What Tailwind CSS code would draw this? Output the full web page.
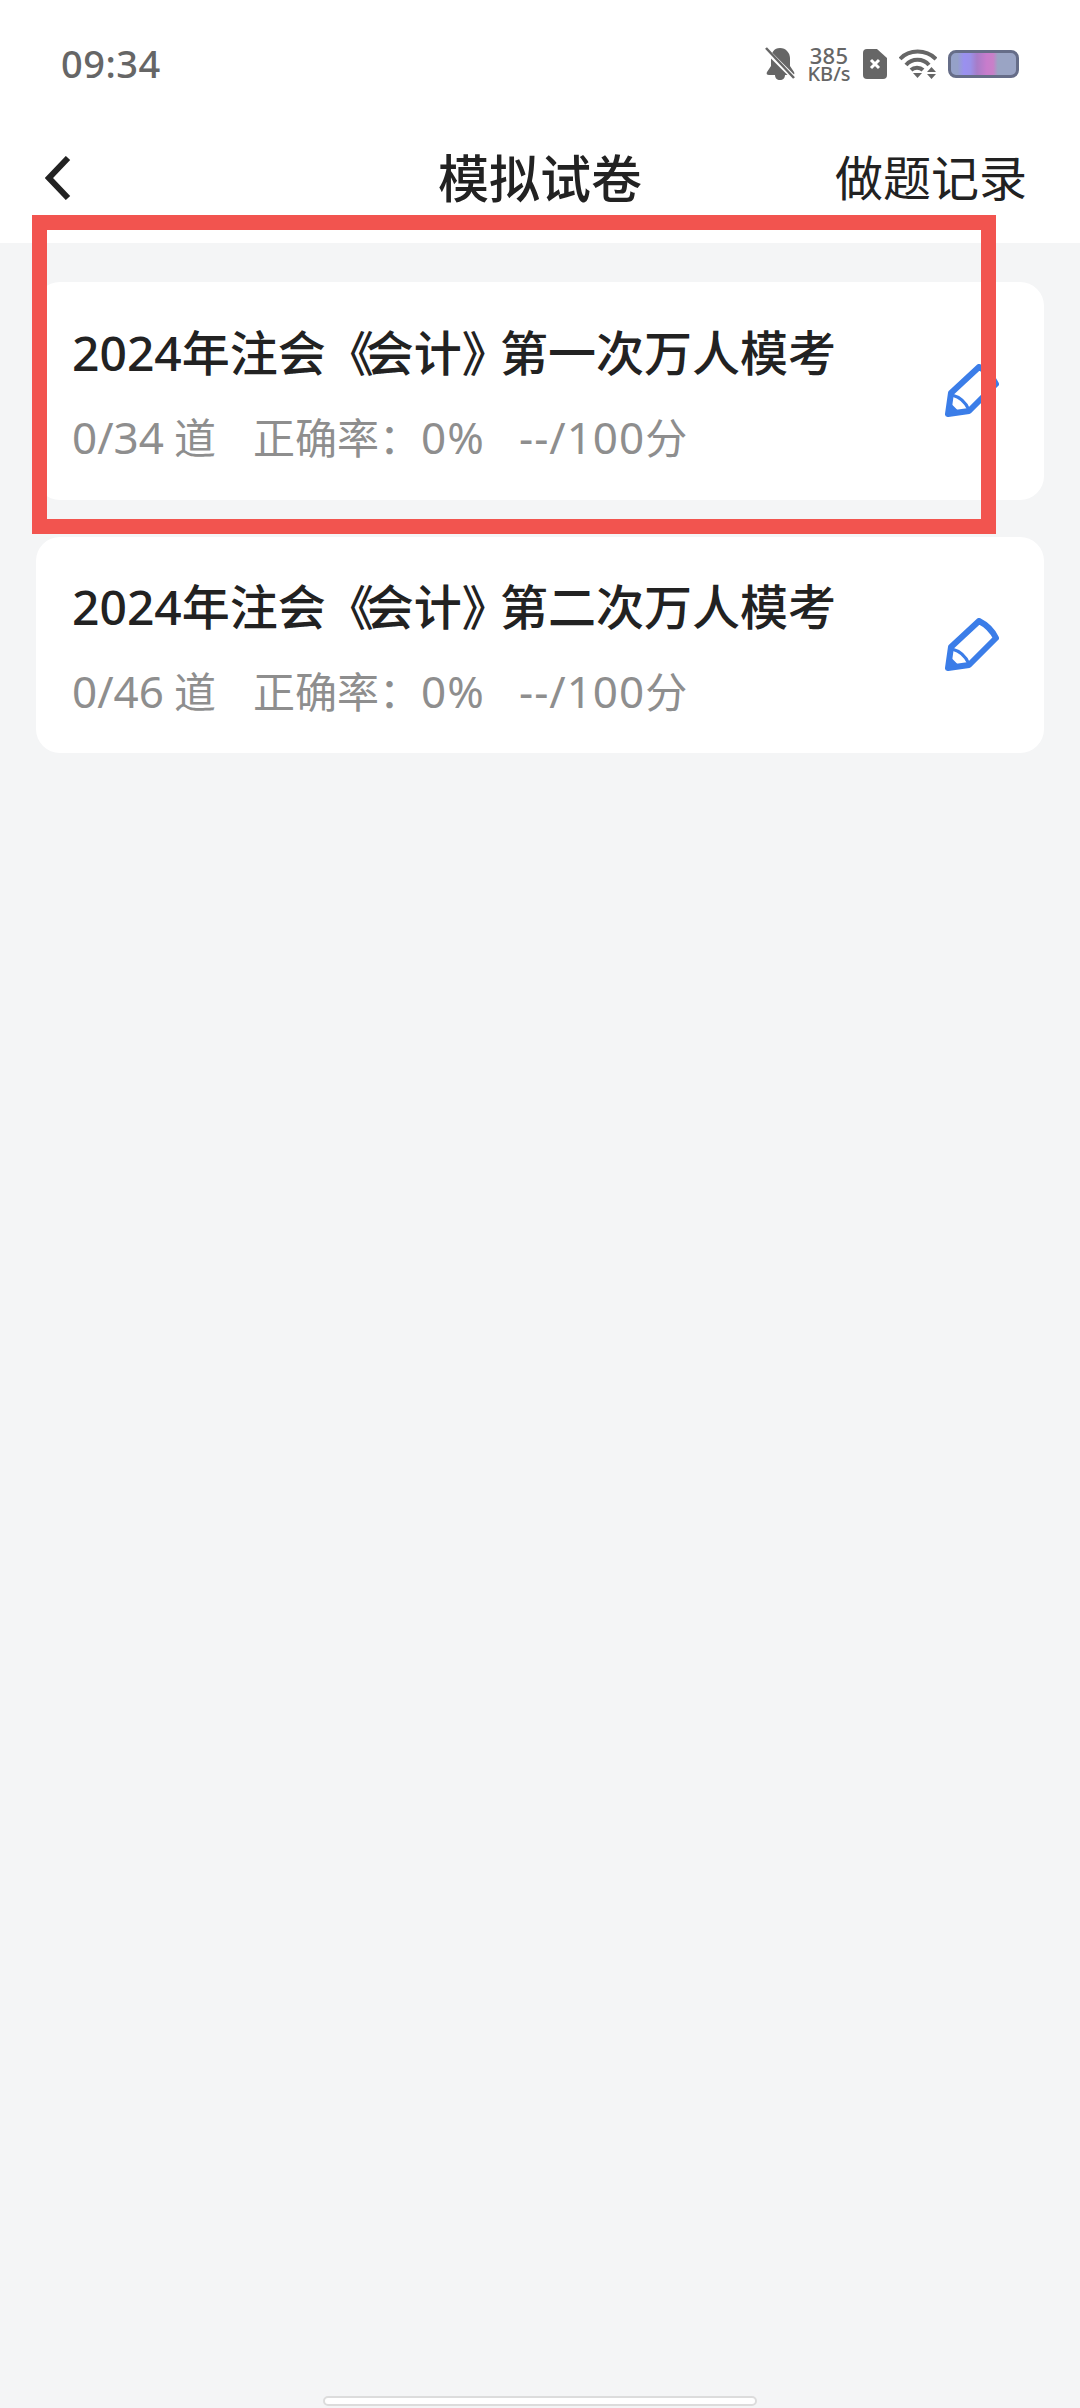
<!DOCTYPE html>
<html lang="zh-CN">

<head>
    <meta charset="UTF-8">
    <meta name="viewport" content="width=device-width, initial-scale=1.0">
    <title>模拟试卷</title>
    <script src="https://cdn.jsdelivr.net/npm/@tailwindcss/browser@4"></script>
</head>

<body class="font-['Noto_Sans','Noto_Sans_CJK_SC',sans-serif]">
    <div class="relative w-[1080px] h-[2408px] bg-[#f4f5f6] overflow-hidden flex flex-col">
        <header class="bg-white h-[243px] shrink-0 flex flex-col">
            <!-- status bar -->
            <div class="flex items-center justify-between h-[48px] mt-[40px] pl-[61px] pr-[61px] text-[#666]">
                <span class="text-[38px] leading-none font-medium tracking-[0.5px] pb-[3px]">09:34</span>
                <div class="flex items-center">
                    <svg class="w-[30px] h-[34px]" viewBox="0 0 30 34" fill="#666">
                        <path d="M15 1c-6 0-9 5-9 10v8l-4 6c-1 2 0 3 2 3h6c0 3 2 5 5 5s5-2 5-5h7c2 0 3-1 2-3l-4-6v-8c0-5-4-10-10-10z" />
                        <path d="M0 2L30 32" stroke="#fff" stroke-width="5" />
                        <path d="M1 1L29 31" stroke="#666" stroke-width="2.5" />
                    </svg>
                    <div class="ml-[12px] flex flex-col items-center w-[44px] font-medium">
                        <span class="text-[22px] leading-[20px] tracking-[0.3px]">385</span>
                        <span class="text-[20px] leading-[18px]">KB/s</span>
                    </div>
                    <svg class="ml-[12px] w-[24px] h-[30px]" viewBox="0 0 24 30">
                        <path d="M4 0h10l10 9v17a4 4 0 0 1-4 4H4a4 4 0 0 1-4-4V4a4 4 0 0 1 4-4z" fill="#666" />
                        <path d="M8 11l8 8M16 11l-8 8" stroke="#fff" stroke-width="3" />
                    </svg>
                    <svg class="ml-[12px] w-[38px] h-[30px]" viewBox="0 0 38 30" fill="none" stroke="#666" stroke-width="4">
                        <path d="M1 10C10 0 27 0 37 10" />
                        <path d="M7 16C13 9 24 9 30 16" />
                        <path d="M12 21C15 18 21 18 24 21" />
                        <path d="M14 24h9l-4.500 5z" fill="#666" stroke="none" />
                        <path d="M28 23h9l-4.500-5zM28 25h9l-4.500 5z" fill="#666" stroke="none" />
                    </svg>
                    <div class="ml-[11px] w-[71px] h-[28px] rounded-[8px] border-[3px] border-[#666d88] bg-[linear-gradient(90deg,#95a1c8_0%,#95a1c8_10%,#9a90f0_20%,#9a90e8_30%,#a77cc8_40%,#c87ccc_55%,#c880c8_65%,#9aa4c4_72%,#9aa4c4_100%)]"></div>
                </div>
            </div>
            <!-- nav bar -->
            <div class="relative flex items-center justify-between h-[60px] mt-[60px] pl-[45px] pr-[53px] text-[#222]">
                <svg class="w-[26px] h-[44px]" viewBox="0 0 26 44" fill="none" stroke="#222" stroke-width="6">
                    <path d="M23 2L4 22l19 20" />
                </svg>
                <span class="absolute left-[440px] w-[200px] text-center whitespace-nowrap text-[51px] leading-none font-medium flex justify-center">模拟试卷</span>
                <span class="text-[48px] leading-none">做题记录</span>
            </div>
        </header>

        <main class="flex flex-col gap-[37px] pt-[39px] pl-[36px] pr-[36px]">
            <div class="h-[218px] bg-white rounded-[24px] flex items-center justify-between pl-[36px] pr-[45px]">
                <div class="pt-[3px]">
                    <h2 class="text-[48px] leading-[60px] font-medium text-[#222] whitespace-nowrap">2024年注会<span class="tracking-[-8px]">《</span>会计<span class="tracking-[-10px]">》</span>第一次万人模考</h2>
                    <div class="mt-[29px] flex items-baseline text-[42px] leading-[50px] text-[#8e8e8e]">
                        <span class="w-[181px]"><span class="text-[44px] mr-[10px]">0/34</span>道</span>
                        <span class="w-[266px]">正确率：<span class="text-[44px] tracking-[1px]">0%</span></span>
                        <span><span class="text-[44px] tracking-[1px]">--/100</span>分</span>
                    </div>
                </div>
                <svg class="w-[54px] h-[54px] shrink-0" viewBox="0 0 54 54" fill="none" stroke="#3b7de8">
                    <path d="M34 3L6 29 3 50l21-3L51 20C47 12 42 7 34 3z" stroke-width="6" stroke-linejoin="round" />
                    <path d="M7 31c8 2 14 8 17 15" stroke-width="3" />
                    <path d="M3 50l1-11 10 10z" fill="#3b7de8" stroke-width="2" />
                </svg>
            </div>
            <div class="h-[216px] bg-white rounded-[24px] flex items-center justify-between pl-[36px] pr-[45px]">
                <div class="pt-[3px]">
                    <h2 class="text-[48px] leading-[60px] font-medium text-[#222] whitespace-nowrap">2024年注会<span class="tracking-[-8px]">《</span>会计<span class="tracking-[-10px]">》</span>第二次万人模考</h2>
                    <div class="mt-[29px] flex items-baseline text-[42px] leading-[50px] text-[#8e8e8e]">
                        <span class="w-[181px]"><span class="text-[44px] mr-[10px]">0/46</span>道</span>
                        <span class="w-[266px]">正确率：<span class="text-[44px] tracking-[1px]">0%</span></span>
                        <span><span class="text-[44px] tracking-[1px]">--/100</span>分</span>
                    </div>
                </div>
                <svg class="w-[54px] h-[54px] shrink-0" viewBox="0 0 54 54" fill="none" stroke="#3b7de8">
                    <path d="M34 3L6 29 3 50l21-3L51 20C47 12 42 7 34 3z" stroke-width="6" stroke-linejoin="round" />
                    <path d="M7 31c8 2 14 8 17 15" stroke-width="3" />
                    <path d="M3 50l1-11 10 10z" fill="#3b7de8" stroke-width="2" />
                </svg>
            </div>
        </main>

        <!-- home indicator -->
        <div class="absolute left-[323px] bottom-[2px] w-[434px] h-[10px] bg-white border-2 border-[#dcdcdc] rounded-full"></div>

        <!-- annotation drawn over the screenshot -->
        <div class="absolute left-[32px] top-[215px] w-[964px] h-[319px] border-[15px] border-[#f2544f]"></div>
    </div>
</body>

</html>
